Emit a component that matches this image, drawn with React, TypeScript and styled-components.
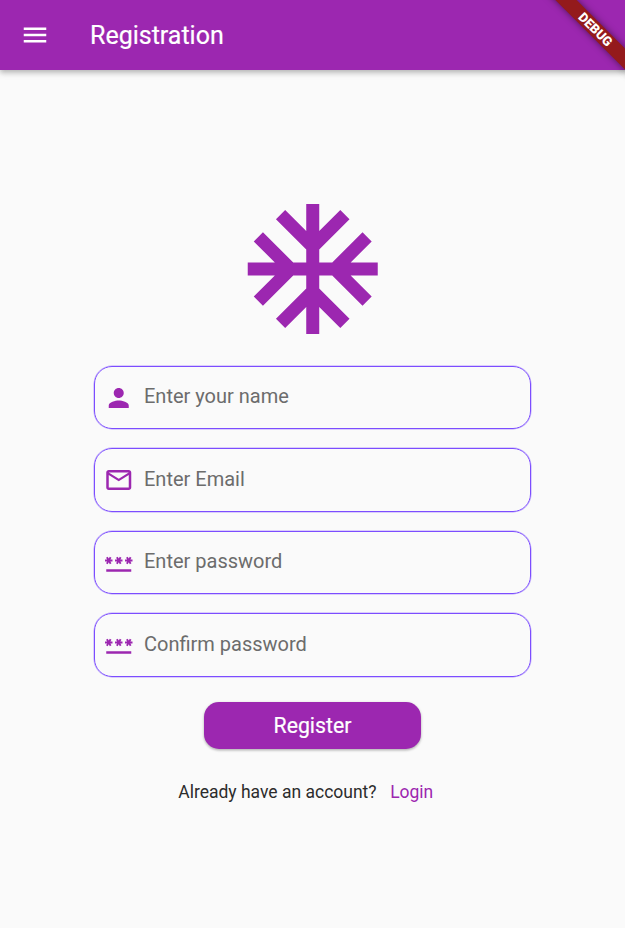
import React from 'react';
import styled, { createGlobalStyle } from 'styled-components';

const PURPLE = '#9c27b0';

const GlobalStyle = createGlobalStyle`
  *, *::before, *::after { box-sizing: border-box; }
  html, body { margin: 0; padding: 0; }
  body { background: #fafafa; font-family: Roboto, sans-serif; overflow: hidden; }
`;

const Screen = styled.div`
  position: relative;
  display: flex;
  flex-direction: column;
  width: 100%;
  height: 100vh;
  overflow: hidden;
  background: #fafafa;
`;

const AppBar = styled.header`
  display: flex;
  align-items: center;
  flex: none;
  height: 70px;
  padding-left: 20px;
  background: ${PURPLE};
  color: #fff;
  box-shadow: 0 2px 5px rgba(0, 0, 0, 0.2), 0 4px 6px rgba(0, 0, 0, 0.1);
`;

const MenuButton = styled.button`
  display: flex;
  padding: 0;
  border: 0;
  background: none;
  color: inherit;
`;

const Title = styled.h1`
  margin: 2px 0 0 40px;
  font-size: 25px;
  font-weight: 400;
  line-height: 30px;
  -webkit-text-stroke: 0.2px currentColor;
`;

const Banner = styled.div`
  position: absolute;
  top: 22px;
  right: -33px;
  width: 125px;
  height: 15px;
  transform: rotate(45deg);
  background: #941a1c;
  box-shadow: 0 0 7px rgba(0, 0, 0, 0.5);
  color: #fff;
  font-size: 13px;
  font-weight: 900;
  line-height: 15px;
  text-align: center;
`;

const Form = styled.form`
  display: flex;
  flex-direction: column;
  align-items: center;
  padding-top: 121px;
`;

const Fields = styled.div`
  display: grid;
  grid-auto-rows: 63.5px;
  row-gap: 19px;
  width: 437px;
  margin-top: 18.8px;
`;

const Field = styled.label`
  display: flex;
  align-items: center;
  padding-left: 9px;
  border: 1px solid #7c4dff;
  border-radius: 18px;
  box-shadow: 0 0 0 0.5px rgba(124, 77, 255, 0.5);
  color: ${PURPLE};
`;

const Input = styled.input`
  flex: 1;
  min-width: 0;
  height: 30px;
  margin: 0 12px 2.4px 10px;
  padding: 0;
  border: 0;
  outline: 0;
  background: none;
  font: 400 20px/30px Roboto, sans-serif;
  color: #222;
  &::placeholder { color: #6c6c6c; opacity: 1; }
`;

const Submit = styled.button`
  width: 216.5px;
  height: 47.5px;
  margin-top: 25.2px;
  padding: 0;
  border: 0;
  border-radius: 15px;
  background: ${PURPLE};
  box-shadow: 0 1px 3px rgba(0, 0, 0, 0.25), 0 2px 2px rgba(0, 0, 0, 0.08);
  color: #fff;
  font: 400 21.25px/48px Roboto, sans-serif;
  -webkit-text-stroke: 0.2px currentColor;
`;

const Footer = styled.p`
  display: flex;
  gap: 13.5px;
  margin: 30.5px 0 0 -13.5px;
  color: #2c2c2c;
  font-size: 17.5px;
  line-height: 24px;
`;

const Login = styled.a`
  color: ${PURPLE};
`;

const Glyph = styled.svg`
  display: block;
  flex: none;
  fill: currentColor;
`;

const Logo = styled(Glyph)`
  color: ${PURPLE};
`;

const paths = {
  menu: 'M3 18h18v-2H3v2zm0-5h18v-2H3v2zm0-7v2h18V6H3z',
  snow: 'M22 11h-4.17l3.24-3.24-1.41-1.42L15 11h-2V9l4.66-4.66-1.42-1.41L13 6.17V2h-2v4.17L7.76 2.93 6.34 4.34 11 9v2H9L4.34 6.34 2.93 7.76 6.17 11H2v2h4.17l-3.24 3.24 1.41 1.42L9 13h2v2l-4.66 4.66 1.42 1.41L11 17.83V22h2v-4.17l3.24 3.24 1.42-1.41L13 15v-2h2l4.66 4.66 1.41-1.42L17.83 13H22z',
  person: 'M12 12c2.21 0 4-1.79 4-4s-1.79-4-4-4-4 1.79-4 4 1.79 4 4 4zm0 2c-2.67 0-8 1.34-8 4v2h16v-2c0-2.66-5.33-4-8-4z',
  mail: 'M22 6c0-1.1-.9-2-2-2H4c-1.1 0-2 .9-2 2v12c0 1.1.9 2 2 2h16c1.1 0 2-.9 2-2V6zm-2 0l-8 5-8-5h16zm0 12H4V8l8 5 8-5v10z',
  password: 'M2 17h20v2H2v-2zm1.15-4.05L4 11.47l.85 1.48 1.3-.75-.85-1.48H7v-1.5H5.3l.85-1.47L4.85 7 4 8.47 3.15 7l-1.3.75.85 1.47H1v1.5h1.7l-.85 1.48 1.3.75zm6.7-.75l1.3.75.85-1.48.85 1.48 1.3-.75-.85-1.48H15v-1.5h-1.7l.85-1.47-1.3-.75L12 8.47 11.15 7l-1.3.75.85 1.47H9v1.5h1.7l-.85 1.48zM23 9.22h-1.7l.85-1.47-1.3-.75L20 8.47 19.15 7l-1.3.75.85 1.47H17v1.5h1.7l-.85 1.48 1.3.75.85-1.48.85 1.48 1.3-.75-.85-1.48H23v-1.5z',
};

const fields = [
  { icon: paths.person, label: 'Enter your name', type: 'text' },
  { icon: paths.mail, label: 'Enter Email', type: 'email' },
  { icon: paths.password, label: 'Enter password', type: 'password' },
  { icon: paths.password, label: 'Confirm password', type: 'password' },
];

export default function App() {
  return (
    <Screen>
      <GlobalStyle />
      <AppBar>
        <MenuButton aria-label="Menu">
          <Glyph width="30" height="30" viewBox="0 0 24 24"><path d={paths.menu} /></Glyph>
        </MenuButton>
        <Title>Registration</Title>
      </AppBar>
      <Banner>DEBUG</Banner>
      <Form>
        <Logo width="156" height="156" viewBox="0.04 0 24 24"><path d={paths.snow} /></Logo>
        <Fields>
          {fields.map((f) => (
            <Field key={f.label}>
              <Glyph width="30" height="30" viewBox="0.2 0 24 24"><path d={f.icon} /></Glyph>
              <Input type={f.type} placeholder={f.label} />
            </Field>
          ))}
        </Fields>
        <Submit type="button">Register</Submit>
        <Footer>
          <span>Already have an account?</span>
          <Login>Login</Login>
        </Footer>
      </Form>
    </Screen>
  );
}
